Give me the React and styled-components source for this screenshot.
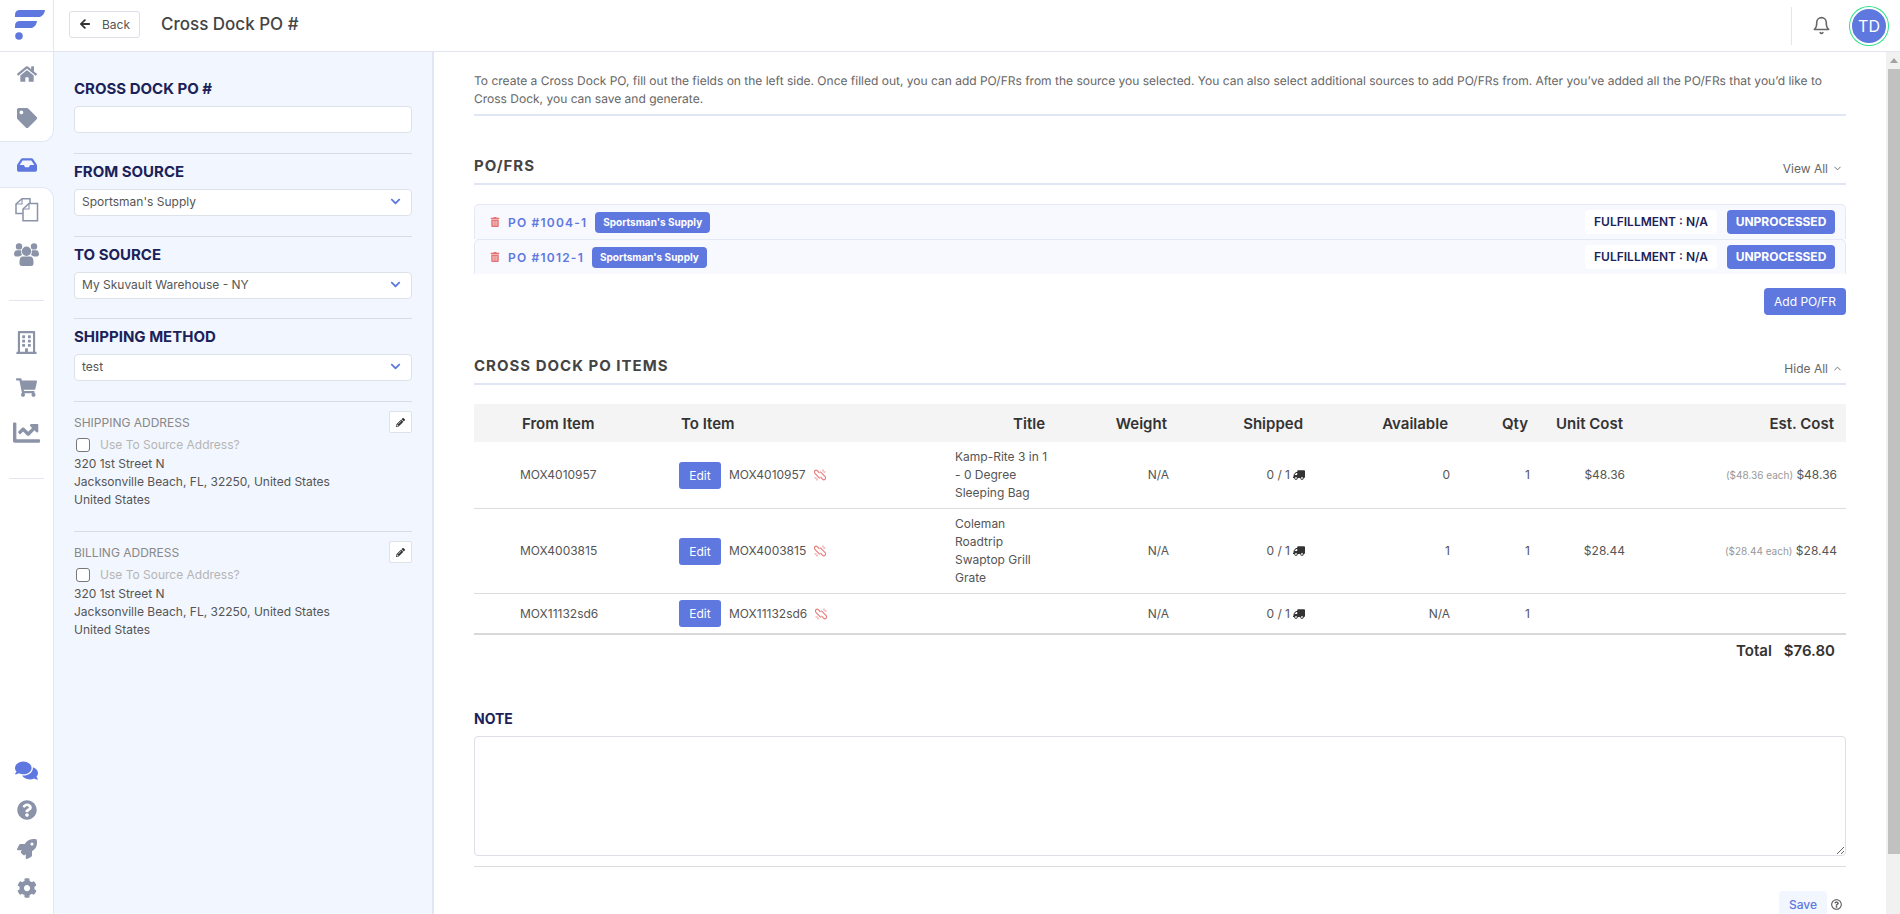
import styled, { createGlobalStyle } from 'styled-components';
import {
  FaHome,
  FaTag,
  FaInbox,
  FaRegBuilding,
  FaShoppingCart,
  FaChartLine,
  FaComments,
  FaQuestionCircle,
  FaRocket,
  FaCog,
  FaArrowLeft,
  FaChevronDown,
  FaPencilAlt,
  FaTrashAlt,
  FaTruck,
  FaRegQuestionCircle,
} from 'react-icons/fa';
import { FiBell, FiChevronDown, FiChevronUp } from 'react-icons/fi';

const blue = '#5f78e0';
const navy = '#1b2259';
const line = '#e1e6f5';
const panel = '#f2f6fe';

const GlobalStyle = createGlobalStyle`
  html, body {
    margin: 0;
    height: 100%;
    overflow: hidden;
  }
  body {
    font-family: Inter, "Noto Sans", sans-serif;
    font-size: 12px;
    color: #555;
    background: #fff;
  }
  * {
    box-sizing: border-box;
  }
`;

const Logo = () => (
  <svg width="53" height="51" viewBox="0 0 53 51">
    <path d="M15 15 Q15 10 20 10 H45 Q44.5 15 40 17 H15 Z" fill={blue} />
    <path d="M15 26 Q15 21 20 21 H37 Q36.5 26 32 28 H15 Z" fill={blue} />
    <circle cx="19" cy="36" r="3.8" fill={blue} />
  </svg>
);

const CopyIcon = () => (
  <svg width="24" height="24" viewBox="0 0 24 24" fill="none" stroke="#8a93a8" strokeWidth="1.5">
    <path d="M8 15.5 H1 V6 L7 0.8 H15 V5" />
    <path d="M7 1 V6 H1" strokeWidth="1.1" />
    <path d="M8 11 L14 5.5 H22.5 V22.8 H8 Z" />
    <path d="M14 5.5 V11 H8" strokeWidth="1.1" />
  </svg>
);

const PeopleIcon = () => (
  <svg width="25" height="23" viewBox="0 0 25 23" fill="#8a93a8">
    <circle cx="5" cy="3.4" r="3.2" />
    <circle cx="20" cy="3.4" r="3.2" />
    <path d="M0 12 Q0 7.5 3 7.3 H7 Q7 10 8 12 L5 13.5 H1.5 Z" />
    <path d="M25 12 Q25 7.5 22 7.3 H18 Q18 10 17 12 L20 13.5 H23.5 Z" />
    <circle cx="12.5" cy="8.2" r="4.7" />
    <path d="M5.5 19 Q5.5 13.6 9 13.6 H16 Q19.5 13.6 19.5 19 V21 Q19.5 23 17 23 H8 Q5.5 23 5.5 21 Z" />
  </svg>
);

const BrokenChain = () => (
  <svg width="12" height="12" viewBox="0 0 12 12" fill="none" stroke="#e98080" strokeWidth="1.2">
    <path d="M5.5 4 L3.5 1.8 a1.8 1.8 0 0 0 -2.6 2.5 L5.8 9.4" />
    <path d="M6.5 8 L8.5 10.2 a1.8 1.8 0 0 0 2.6 -2.5 L6.2 2.6" />
    <path d="M9 0.5 v2 M11.5 3 h-2 M3 11.5 v-2 M0.5 9 h2" strokeWidth="0.9" />
  </svg>
);

const PANEL_FIELDS = [
  { title: 'FROM SOURCE', value: "Sportsman's Supply" },
  { title: 'TO SOURCE', value: 'My Skuvault Warehouse - NY' },
  { title: 'SHIPPING METHOD', value: 'test' },
];

const ADDRESSES = ['SHIPPING ADDRESS', 'BILLING ADDRESS'];

const POS = ['PO #1004-1', 'PO #1012-1'];

const ITEMS = [
  {
    sku: 'MOX4010957',
    title: 'Kamp-Rite 3 in 1 - 0 Degree Sleeping Bag',
    available: '0',
    unit: '$48.36',
    each: '($48.36 each)',
    cost: '$48.36',
  },
  {
    sku: 'MOX4003815',
    title: 'Coleman Roadtrip Swaptop Grill Grate',
    available: '1',
    unit: '$28.44',
    each: '($28.44 each)',
    cost: '$28.44',
  },
  { sku: 'MOX11132sd6', title: '', available: 'N/A', unit: '', each: '', cost: '' },
];

export default function App() {
  return (
    <>
      <GlobalStyle />
      <Page>
        <TopBar>
          <LogoBox>
            <Logo />
          </LogoBox>
          <BackButton>
            <FaArrowLeft size={12} color="#333" />
            Back
          </BackButton>
          <PageTitle>Cross Dock PO #</PageTitle>
          <TopRight>
            <FiBell size={19} color="#666" />
            <Avatar>TD</Avatar>
          </TopRight>
        </TopBar>
        <Body>
          <Rail>
            <RailBlock $bottom>
              <RailItem $short><FaHome size={20} /></RailItem>
              <RailItem $short><FaTag size={20} /></RailItem>
            </RailBlock>
            <RailActive>
              <FaInbox size={20} />
            </RailActive>
            <RailBlock $top $grow>
              <RailItem $short><CopyIcon /></RailItem>
              <RailItem $short><PeopleIcon /></RailItem>
              <RailDivider />
              <RailItem><FaRegBuilding size={23} /></RailItem>
              <RailItem><FaShoppingCart size={21} /></RailItem>
              <RailItem><FaChartLine size={27} /></RailItem>
              <RailDivider />
              <RailBottom>
                <RailSmallItem $blue><FaComments size={23} /></RailSmallItem>
                <RailSmallItem><FaQuestionCircle size={20} /></RailSmallItem>
                <RailSmallItem><FaRocket size={20} /></RailSmallItem>
                <RailSmallItem><FaCog size={20} /></RailSmallItem>
              </RailBottom>
            </RailBlock>
          </Rail>
          <SidePanel>
            <PanelSection $first>
              <PanelHeading>CROSS DOCK PO #</PanelHeading>
              <TextInput />
            </PanelSection>
            {PANEL_FIELDS.map(field => (
              <PanelSection key={field.title}>
                <PanelHeading>{field.title}</PanelHeading>
                <SelectBox>
                  {field.value}
                  <FaChevronDown size={11} color={blue} />
                </SelectBox>
              </PanelSection>
            ))}
            {ADDRESSES.map(title => (
              <AddressSection key={title}>
                <AddressHead>
                  <AddressLabel>{title}</AddressLabel>
                  <EditSmall>
                    <FaPencilAlt size={9} color="#333" />
                  </EditSmall>
                </AddressHead>
                <CheckRow>
                  <CheckBox />
                  Use To Source Address?
                </CheckRow>
                <AddressLine>320 1st Street N</AddressLine>
                <AddressLine>Jacksonville Beach, FL, 32250, United States</AddressLine>
                <AddressLine>United States</AddressLine>
              </AddressSection>
            ))}
          </SidePanel>
          <Main>
            <Intro>
              To create a Cross Dock PO, fill out the fields on the left side. Once filled out, you can
              add PO/FRs from the source you selected. You can also select additional sources to add
              PO/FRs from. After you’ve added all the PO/FRs that you’d like to Cross Dock, you can save
              and generate.
            </Intro>
            <SectionHead>
              <SectionTitle>PO/FRS</SectionTitle>
              <ToggleLink>
                View All <FiChevronDown size={11} />
              </ToggleLink>
            </SectionHead>
            <PoList>
              {POS.map(po => (
                <PoRow key={po}>
                  <FaTrashAlt size={10} color="#e57373" />
                  <PoLink>{po}</PoLink>
                  <SourceBadge>Sportsman's Supply</SourceBadge>
                  <FulfillChip>FULFILLMENT : N/A</FulfillChip>
                  <StatusChip>UNPROCESSED</StatusChip>
                </PoRow>
              ))}
            </PoList>
            <AddRow>
              <AddButton>Add PO/FR</AddButton>
            </AddRow>
            <SectionHead $tight>
              <SectionTitle>CROSS DOCK PO ITEMS</SectionTitle>
              <ToggleLink>
                Hide All <FiChevronUp size={11} />
              </ToggleLink>
            </SectionHead>
            <ItemsTable>
              <thead>
                <tr>
                  <Th $w={195} $left $pl={48}>From Item</Th>
                  <Th $w={276} $left>To Item</Th>
                  <Th $w={112}>Title</Th>
                  <Th $w={122}>Weight</Th>
                  <Th $w={136}>Shipped</Th>
                  <Th $w={145}>Available</Th>
                  <Th $w={80}>Qty</Th>
                  <Th $w={95}>Unit Cost</Th>
                  <Th $w={211}>Est. Cost</Th>
                </tr>
              </thead>
              <tbody>
                {ITEMS.map(item => (
                  <tr key={item.sku}>
                    <Td $left $pl={46}>{item.sku}</Td>
                    <Td $left>
                      <ToCell>
                        <EditButton>Edit</EditButton>
                        {item.sku}
                        <BrokenChain />
                      </ToCell>
                    </Td>
                    <Td $left $pr={6}>{item.title}</Td>
                    <Td>N/A</Td>
                    <Td>
                      <ShippedCell>
                        0 / 1 <TruckIcon size={12} color="#333" />
                      </ShippedCell>
                    </Td>
                    <Td>{item.available}</Td>
                    <Td>1</Td>
                    <Td>{item.unit}</Td>
                    <Td $pr={9}>
                      <EachNote>{item.each}</EachNote> {item.cost}
                    </Td>
                  </tr>
                ))}
              </tbody>
            </ItemsTable>
            <TotalRow>
              <span>Total</span>
              <span>$76.80</span>
            </TotalRow>
            <NoteHeading>NOTE</NoteHeading>
            <NoteBox />
            <SaveRow>
              <SaveButton>Save</SaveButton>
              <FaRegQuestionCircle size={11} color="#555" />
            </SaveRow>
          </Main>
          <ScrollRail>
            <ScrollUp />
            <ScrollThumb />
          </ScrollRail>
        </Body>
      </Page>
    </>
  );
}

const Page = styled.div`
  display: flex;
  flex-direction: column;
  height: 914px;
  overflow: hidden;
`;

const TopBar = styled.header`
  display: flex;
  align-items: center;
  flex: 0 0 52px;
  border-bottom: 1px solid #e3e6ee;
`;

const LogoBox = styled.div`
  width: 54px;
  height: 51px;
  border-right: 1px solid ${line};
  margin-right: 15px;
`;

const BackButton = styled.button`
  display: flex;
  align-items: center;
  gap: 12px;
  width: 71px;
  height: 27px;
  margin-bottom: 3px;
  padding: 0 9px 0 10px;
  background: #fff;
  border: 1px solid #dcdfe6;
  border-radius: 3px;
  font: 400 12px Inter, sans-serif;
  color: #555;
`;

const PageTitle = styled.h1`
  margin: 0 0 3px 21px;
  font-size: 17px;
  font-weight: 500;
  color: #444;
`;

const TopRight = styled.div`
  display: flex;
  align-items: center;
  gap: 19px;
  margin-left: auto;
  height: 38px;
  padding-left: 20px;
  margin-right: 12px;
  border-left: 1px solid #e6e6e6;
`;

const Avatar = styled.div`
  display: flex;
  align-items: center;
  justify-content: center;
  width: 38px;
  height: 38px;
  border-radius: 50%;
  background: ${blue};
  border: 2px solid #fff;
  box-shadow: 0 0 0 1px #2ee08a;
  color: #fff;
  font-size: 16px;
`;

const Body = styled.div`
  display: flex;
  flex: 1;
  min-height: 0;
`;

const Rail = styled.nav`
  display: flex;
  flex-direction: column;
  flex: 0 0 54px;
  background: ${panel};
`;

const RailBlock = styled.div`
  display: flex;
  flex-direction: column;
  flex: ${p => (p.$grow ? 1 : '0 0 auto')};
  padding-bottom: ${p => (p.$bottom ? '1px' : '0')};
  background: #fff;
  border-right: 1px solid ${line};
  color: #8a93a8;
  border-bottom: ${p => (p.$bottom ? `1px solid ${line}` : 'none')};
  border-top: ${p => (p.$top ? `1px solid ${line}` : 'none')};
  border-bottom-right-radius: ${p => (p.$bottom ? '12px' : '0')};
  border-top-right-radius: ${p => (p.$top ? '12px' : '0')};
`;

const RailItem = styled.div`
  display: flex;
  align-items: center;
  justify-content: center;
  height: ${p => (p.$short ? '44px' : '45px')};
`;

const RailActive = styled(RailItem)`
  padding-right: 1px;
  color: ${blue};
`;

const RailDivider = styled.div`
  height: 1px;
  margin: 23.5px 9px 19px;
  background: #e3e6ee;
`;

const RailBottom = styled.div`
  display: flex;
  flex-direction: column;
  margin-top: auto;
  padding-bottom: 7px;
`;

const RailSmallItem = styled.div`
  display: flex;
  align-items: center;
  justify-content: center;
  height: 39px;
  color: ${p => (p.$blue ? blue : '#8a93a8')};
`;

const SidePanel = styled.aside`
  flex: 0 0 380px;
  padding: 20px 20px 0;
  background: ${panel};
  border-right: 2px solid ${line};
`;

const PanelSection = styled.section`
  padding: ${p => (p.$first ? '7px 0 20px' : '8px 0 19.67px')};
  border-top: ${p => (p.$first ? 'none' : '1px solid #d8dce8')};
`;

const PanelHeading = styled.h2`
  margin: 0 0 7px;
  font-size: 15px;
  line-height: 20px;
  font-weight: 700;
  color: ${navy};
`;

const TextInput = styled.div`
  height: 27px;
  background: #fff;
  border: 1px solid #dde1ea;
  border-radius: 4px;
`;

const SelectBox = styled(TextInput)`
  display: flex;
  align-items: center;
  justify-content: space-between;
  padding: 0 10px 2px 7px;
  font-size: 12px;
  color: #555;
`;

const AddressSection = styled.section`
  height: 130px;
  padding-top: 9px;
  border-top: 1px solid #d8dce8;
`;

const AddressHead = styled.div`
  display: flex;
  align-items: center;
  justify-content: space-between;
  height: 23px;
`;

const AddressLabel = styled.div`
  font-size: 12px;
  color: #888;
`;

const EditSmall = styled.div`
  display: flex;
  align-items: center;
  justify-content: center;
  width: 23px;
  height: 22px;
  background: #fff;
  border: 1px solid #dde1ea;
  border-radius: 2px;
`;

const CheckRow = styled.div`
  display: flex;
  align-items: center;
  gap: 10px;
  height: 20px;
  margin-top: 1px;
  padding-left: 2px;
  color: #b5b5b5;
`;

const CheckBox = styled.span`
  width: 14px;
  height: 14px;
  background: #fff;
  border: 1px solid #777;
  border-radius: 3px;
`;

const AddressLine = styled.div`
  line-height: 18px;
  color: #555;
`;

const Main = styled.main`
  flex: 1;
  min-width: 0;
  padding: 20px 40px 42px;
  overflow: hidden;
`;

const ScrollRail = styled.div`
  display: flex;
  flex-direction: column;
  align-items: flex-end;
  flex: 0 0 14px;
  background: #f1f1f1;
`;

const ScrollUp = styled.div`
  width: 0;
  height: 0;
  margin: 6px 2px 6px 0;
  border-left: 4px solid transparent;
  border-right: 4px solid transparent;
  border-bottom: 5px solid #a3a3a3;
`;

const ScrollThumb = styled.div`
  width: 12px;
  height: 785px;
  background: #c1c1c1;
`;

const Intro = styled.p`
  margin: 0;
  padding-bottom: 6px;
  line-height: 18px;
  text-rendering: geometricPrecision;
  color: #666;
  border-bottom: 2px solid ${line};
`;

const SectionHead = styled.div`
  display: flex;
  align-items: flex-end;
  justify-content: space-between;
  margin-top: ${p => (p.$tight ? '41px' : '40px')};
  padding-bottom: 7px;
  border-bottom: 2px solid ${line};
`;

const SectionTitle = styled.h3`
  margin: 0;
  font-size: 15px;
  line-height: 20px;
  font-weight: 700;
  letter-spacing: 1px;
  color: #444;
`;

const ToggleLink = styled.span`
  display: flex;
  align-items: center;
  gap: 4px;
  margin-right: 3px;
  color: #666;
`;

const PoList = styled.div`
  margin-top: 19px;
`;

const PoRow = styled.div`
  display: flex;
  align-items: center;
  height: 35px;
  padding: 0 10px 0 15px;
  background: #f7f9fe;
  border: 1px solid #e4e9f6;
  border-bottom: none;
  border-radius: 5px 5px 0 0;
`;

const PoLink = styled.span`
  margin: 0 8px 0 8px;
  font-size: 12px;
  font-weight: 600;
  letter-spacing: 1.2px;
  color: ${blue};
`;

const SourceBadge = styled.span`
  padding: 0 8px;
  line-height: 21px;
  font-size: 10px;
  font-weight: 700;
  color: #fff;
  background: ${blue};
  border-radius: 4px;
`;

const FulfillChip = styled.span`
  margin-left: auto;
  padding: 0 9px;
  line-height: 24px;
  font-size: 12px;
  font-weight: 600;
  color: ${navy};
  background: #fff;
  border-radius: 4px;
`;

const StatusChip = styled.span`
  width: 108px;
  margin-left: 10px;
  line-height: 24px;
  text-align: center;
  font-size: 12px;
  font-weight: 700;
  color: #fff;
  background: ${blue};
  border-radius: 4px;
`;

const AddRow = styled.div`
  display: flex;
  justify-content: flex-end;
  margin-top: 14px;
`;

const AddButton = styled.button`
  width: 82px;
  height: 27px;
  padding: 0;
  font: 400 12px Inter, sans-serif;
  color: #fff;
  background: ${blue};
  border: none;
  border-radius: 4px;
`;

const ItemsTable = styled.table`
  width: 100%;
  margin-top: 19px;
  border-collapse: collapse;
  table-layout: fixed;
  border-bottom: 2px solid #d8d8d8;
`;

const Th = styled.th`
  width: ${p => p.$w}px;
  height: 38px;
  padding: 0 12px 0 ${p => p.$pl || 12}px;
  text-align: ${p => (p.$left ? 'left' : 'right')};
  font-size: 15px;
  font-weight: 600;
  color: #333;
  background: #f4f4f4;
`;

const Td = styled.td`
  padding: 6px ${p => p.$pr || 10}px 6px ${p => p.$pl || 10}px;
  text-align: ${p => (p.$left ? 'left' : 'right')};
  line-height: 18px;
  color: #555;
  border-top: 1px solid #ddd;

  tr:first-child > & {
    border-top: none;
  }
`;

const ToCell = styled.div`
  display: flex;
  align-items: center;
  gap: 8px;
`;

const EditButton = styled.button`
  width: 42px;
  height: 27px;
  padding: 0;
  font: 400 12px Inter, sans-serif;
  color: #fff;
  background: ${blue};
  border: none;
  border-radius: 3px;
`;

const ShippedCell = styled.span`
  display: inline-flex;
  align-items: center;
  gap: 3px;
`;

const TruckIcon = styled(FaTruck)`
  transform: scaleX(-1);
`;

const EachNote = styled.span`
  font-size: 10px;
  color: #999;
`;

const TotalRow = styled.div`
  display: flex;
  justify-content: flex-end;
  gap: 12px;
  padding: 6px 11px 0 0;
  font-size: 15px;
  line-height: 20px;
  font-weight: 600;
  color: #333;
`;

const NoteHeading = styled.h3`
  margin: 48px 0 0;
  font-size: 14px;
  line-height: 20px;
  font-weight: 700;
  color: ${navy};
`;

const NoteBox = styled.textarea`
  display: block;
  width: 100%;
  height: 120px;
  margin-top: 7px;
  border: 1px solid #dcdfe8;
  border-radius: 4px;
  outline: none;
`;

const SaveRow = styled.div`
  display: flex;
  justify-content: flex-end;
  align-items: center;
  gap: 4px;
  margin-top: 10px;
  padding: 24px 4px 0 0;
  border-top: 1px solid #ddd;
`;

const SaveButton = styled.button`
  height: 27px;
  width: 48px;
  padding: 0;
  font: 500 12px Inter, sans-serif;
  color: ${blue};
  background: ${panel};
  border: none;
  border-radius: 4px;
`;
